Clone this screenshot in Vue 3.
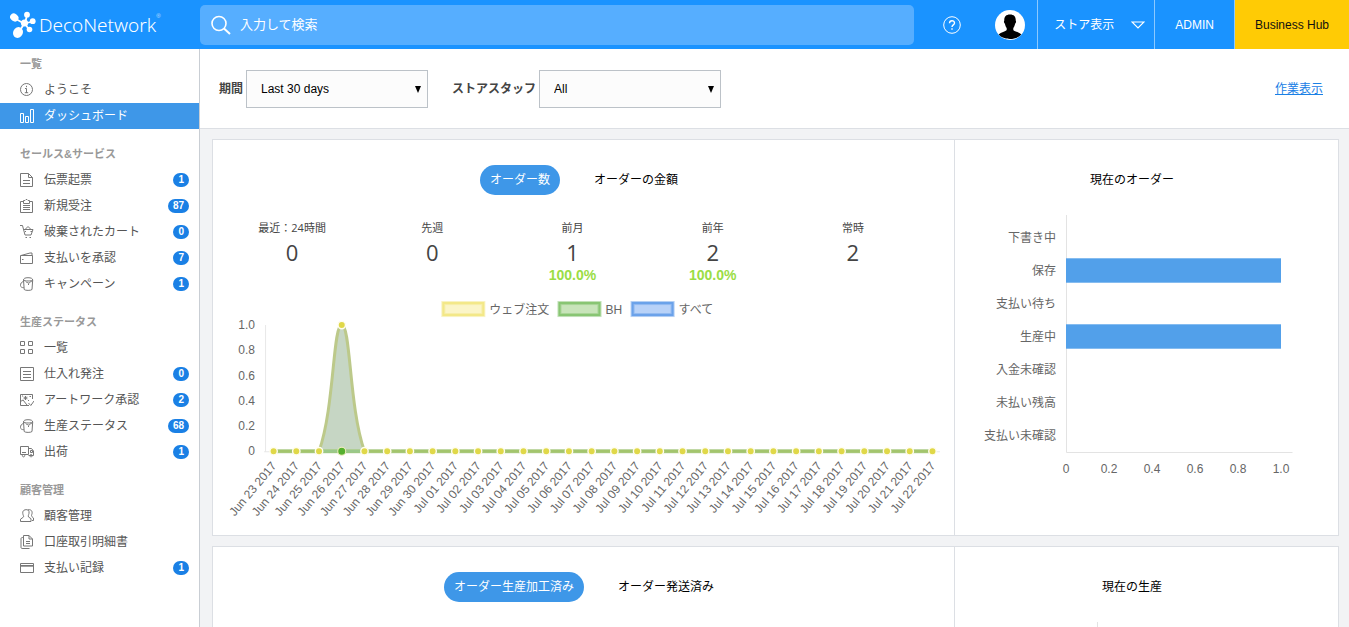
<script setup>
import { ref } from 'vue'

const search = ref('')
const period = ref('Last 30 days')
const staff = ref('All')

const sections = [
  {
    title: '一覧',
    items: [
      { icon: 'info', label: 'ようこそ' },
      { icon: 'bars', label: 'ダッシュボード', active: true },
    ],
  },
  {
    title: 'セールス&サービス',
    items: [
      { icon: 'doc', label: '伝票起票', count: 1 },
      { icon: 'clipboard', label: '新規受注', count: 87 },
      { icon: 'cart', label: '破棄されたカート', count: 0 },
      { icon: 'wallet', label: '支払いを承認', count: 7 },
      { icon: 'bucket', label: 'キャンペーン', count: 1 },
    ],
  },
  {
    title: '生産ステータス',
    items: [
      { icon: 'grid', label: '一覧' },
      { icon: 'list', label: '仕入れ発注', count: 0 },
      { icon: 'art', label: 'アートワーク承認', count: 2 },
      { icon: 'bucket', label: '生産ステータス', count: 68 },
      { icon: 'truck', label: '出荷', count: 1 },
    ],
  },
  {
    title: '顧客管理',
    items: [
      { icon: 'people', label: '顧客管理' },
      { icon: 'copy', label: '口座取引明細書' },
      { icon: 'card', label: '支払い記録', count: 1 },
    ],
  },
]

const icons = {
  info: 'M6.500 .5a6 6 0 1 0 0 12a6 6 0 1 0 0-12M6.500 2.800v1.400M5 5.500h1.500v4.500M4.800 9.700h3.400',
  bars: 'M.5 4.500h3v9h-3zM5.500 7.500h3v6h-3zM10.500 .5h3v13h-3z',
  doc: 'M.5 .5h8l4 4v9h-12zM8.500 .5v4h4M3 7.500h7M3 10.500h7',
  clipboard: 'M3.500 2.500h-3v11h12v-11h-3M3.500 4.500v-3h1.500l1-1h1l1 1h1.500v3zM3 6.500h7M3 8.500h7M3 10.500h7',
  cart: 'M0 .5h2.500l2.500 9.500h6l2-5.500h-9M5 4.500l3-3l3 3M5.500 12.500h1.500M9.500 12.500h1.500M5 6.500h1M10.500 6.500h1.500',
  wallet: 'M.5 4.500h12v8h-12zM1 4.500l9-2.500h2v2.500M2 8.500h1.500',
  bucket: 'M3.500 3c0-1.500 1.500-2.300 4.500-2.300s4.700.8 4.700 2.300c0 1.300-9.200 1.300-9.200 0M3.500 3l.7 9.500c1 1.200 6.800 1.200 7.800 0l.7-9.500M3.600 4.500c-2.300.5-3.100 2-3.100 4c0 1.500 1.500 2.200 3.300 2.200M6 4.500c.5 2 2.300.3 2.800 1.800c.5-1.500 2.300-1.500 3-1.800M8.500 6.500v1.500',
  grid: 'M.5 .5h4v4h-4zM8.500 .5h4v4h-4zM.5 8.500h4v4h-4zM8.500 8.500h4v4h-4z',
  list: 'M.5 .5h13v13h-13zM3 4.500h8M3 7.500h8M3 10.500h8',
  art: 'M12.500 6v-4.500h-12v11h8.500M.5 8.500l2.500-1.500l4 5M3.500 5h4M5.500 3v4M4.200 3.700l2.600 2.600M6.800 3.700l-2.600 2.600M2 3h1M9.500 3.500h1.500M8 7.500h1M8.500 10l2.300 2.500l3.200-4.500',
  truck: 'M.5 1.500h8v8h-8zM2 7.500h4M8.500 3.500h3l2 2.500v4.500h-5M3.500 9.500a1.200 1.200 0 1 0 .1 0M11 9.500a1.200 1.200 0 1 0 .1 0M10.500 5.500h2v2h-2z',
  people: 'M5 .8c3-.8 4.500 1 4 3.500c-.5 2-1 2.200-.5 3.700l2.500 1.700v2.800h-10.500v-2.300l3-2.200c.5-1-.5-1.500-.7-3.500c-.3-2 .5-3.200 2.200-3.700M8 .8c3.500-.5 4.500 1.500 4 4c-.5 1.500-.7 2-.2 2.700l1.700 1.500v2.500h-1.500',
  copy: 'M3.500 .5h5.500l3.500 3.500v7h-9zM9 .5v3.500h3.500M3.500 2.500c-2 0-2.500 0-2.500 1.500v8c0 1.500.5 1.500 2 1.500h6.500M6 6.500h4M6 8.500h4',
  card: 'M.5 2.500h13v9h-13zM.5 4.500h13M.5 5.200h13',
}

const stats = [
  { label: '最近：24時間', value: 0 },
  { label: '先週', value: 0 },
  { label: '前月', value: 1, change: '100.0%' },
  { label: '前年', value: 2, change: '100.0%' },
  { label: '常時', value: 2 },
]

const legend = [
  { label: 'ウェブ注文', x: 230, textX: 276, fill: '#fbf5c8', stroke: '#f3e888' },
  { label: 'BH', x: 346, textX: 392, fill: '#c8e4ba', stroke: '#88c573' },
  { label: 'すべて', x: 419, textX: 465, fill: '#b8d2f8', stroke: '#6ba2ea' },
]

const days = []
for (let i = 0; i < 30; i++) {
  const name = i < 8 ? `Jun ${23 + i} 2017` : `Jul ${String(i - 7).padStart(2, '0')} 2017`
  days.push({ name, x: 60.5 + (i * 658) / 29, value: i === 3 ? 1 : 0 })
}
const yOf = (v) => 161 - v * 126
const ticks = ['0', '0.2', '0.4', '0.6', '0.8', '1.0']

const x2 = days[2].x
const x3 = days[3].x
const x4 = days[4].x
const peak = `M${x2} 161C${x2 + 15.400} 118 ${x3 - 9} 35 ${x3} 35S${x4 - 15.400} 118 ${x4} 161`

const orders = [
  { label: '下書き中', value: 0 },
  { label: '保存', value: 1 },
  { label: '支払い待ち', value: 0 },
  { label: '生産中', value: 1 },
  { label: '入金未確認', value: 0 },
  { label: '未払い残高', value: 0 },
  { label: '支払い未確認', value: 0 },
]
</script>

<template>
  <div class="page">
    <header class="topbar">
      <a class="logo" href="#" aria-label="DecoNetwork">
        <svg width="28" height="28" viewBox="0 0 28 28" fill="#fff" stroke="#fff">
          <path d="M5 7.500L14 12.500M17 4.500L15 12M22.500 10.500L15 12.500M19.500 19L15 13M9 21L14 13" fill="none" stroke-width="1.800" />
          <g stroke="none">
            <ellipse cx="4.300" cy="6.500" rx="4.400" ry="3.700" transform="rotate(35 4.300 6.500)" />
            <circle cx="17" cy="3.700" r="2.900" />
            <circle cx="22.700" cy="10.200" r="2.900" />
            <circle cx="14.500" cy="12" r="3.600" />
            <circle cx="19.500" cy="18.500" r="2.800" />
            <ellipse cx="8" cy="21.500" rx="4.800" ry="5.600" transform="rotate(25 8 21.500)" />
          </g>
        </svg>
        <span class="brand">DecoNetwork</span><sup class="reg">®</sup>
      </a>
      <label class="search">
        <svg width="20" height="20" viewBox="0 0 20 20" fill="none" stroke="#fff" stroke-width="1.600">
          <circle cx="8" cy="8.500" r="7" />
          <path d="M13 13.500l6 5.500" stroke-width="2" />
        </svg>
        <input v-model="search" type="text" placeholder="入力して検索" aria-label="入力して検索" />
      </label>
      <button class="help" type="button" aria-label="Help">
        <svg width="18" height="18" viewBox="0 0 18 18" fill="none" stroke="#fff">
          <circle cx="9" cy="9" r="8.300" />
          <path d="M6.500 7.300c0-3.400 5-3.400 5-.3c0 2-2.500 1.800-2.500 4M9 12.300v1.500" stroke-width="1.400" />
        </svg>
      </button>
      <button class="avatar" type="button" aria-label="Account">
        <svg width="30" height="30" viewBox="0 0 30 30">
          <circle cx="15" cy="15" r="15" fill="#fff" />
          <path d="M15 4.500c-4.300 0-6 2.600-5.700 6c-.7.500-.3 2.600.6 3.200c.4 2 1 3.200 1.800 4.200v2c-1 1.500-5.900 2-8 4.700c2.300 3 7 4.400 11.300 4.400s9-1.400 11.300-4.400c-2.100-2.700-7-3.200-8-4.700v-2c.8-1 1.400-2.200 1.800-4.200c.9-.6 1.300-2.700.6-3.200c.3-3.400-1.400-6-5.700-6z" />
        </svg>
      </button>
      <button class="store" type="button">
        ストア表示
        <svg width="14" height="8" viewBox="0 0 14 8" fill="none" stroke="#fff" stroke-width="1.200"><path d="M1 1h12l-6 6z" /></svg>
      </button>
      <a class="top-link" href="#">ADMIN</a>
      <a class="top-link hub" href="#">Business Hub</a>
    </header>

    <div class="body">
      <nav class="sidebar">
        <section v-for="s in sections" :key="s.title">
          <h2>{{ s.title }}</h2>
          <a v-for="item in s.items" :key="item.label" href="#" :class="{ active: item.active }">
            <svg width="14" height="14" viewBox="0 0 14 14" fill="none" stroke="currentColor">
              <path :d="icons[item.icon]" />
            </svg>
            <span class="name">{{ item.label }}</span>
            <span v-if="item.count !== undefined" class="badge">{{ item.count }}</span>
          </a>
        </section>
      </nav>

      <main>
        <form class="filters" @submit.prevent>
          <label for="period">期間</label>
          <span class="select">
            <select id="period" v-model="period"><option>Last 30 days</option></select>
            <svg width="6" height="7" viewBox="0 0 6 7"><path d="M0 0h6l-3 7z" /></svg>
          </span>
          <label for="staff">ストアスタッフ</label>
          <span class="select">
            <select id="staff" v-model="staff"><option>All</option></select>
            <svg width="6" height="7" viewBox="0 0 6 7"><path d="M0 0h6l-3 7z" /></svg>
          </span>
          <a class="work" href="#">作業表示</a>
        </form>

        <div class="cards">
          <section class="card">
            <div class="panel">
              <div class="tabs">
                <button type="button" class="on">オーダー数</button>
                <button type="button">オーダーの金額</button>
              </div>
              <div class="stats">
                <div v-for="s in stats" :key="s.label" class="stat">
                  <span class="stat-label">{{ s.label }}</span>
                  <span class="stat-value">{{ s.value }}</span>
                  <span v-if="s.change" class="stat-change">{{ s.change }}</span>
                </div>
              </div>
              <svg class="chart line-chart" viewBox="0 0 741 235">
                <g v-for="l in legend" :key="l.label">
                  <rect :x="l.x" y="13" width="40" height="12" :fill="l.fill" :stroke="l.stroke" stroke-width="4" stroke-opacity=".5" />
                  <rect :x="l.x" y="13" width="40" height="12" fill="none" :stroke="l.stroke" stroke-width="2" />
                  <text :x="l.textX" y="24">{{ l.label }}</text>
                </g>
                <path d="M52.500 35v126M51 161.500h675" stroke="#e8e8e8" fill="none" />
                <text v-for="(t, i) in ticks" :key="t" x="42" :y="165 - i * 25.200" text-anchor="end">{{ t }}</text>
                <path :d="peak" fill="#c6d6c4" stroke="#bcc98a" stroke-width="3" />
                <path :d="`M${days[0].x} 161H${days[29].x}`" stroke="#b9d3a0" stroke-width="4" />
                <path :d="`M${days[0].x} 161H${days[29].x}`" stroke="#a3c56d" stroke-width="3" />
                <path :d="`M${x2} 161H${x4}`" stroke="#9ac88a" stroke-width="3" />
                <circle :cx="x3" cy="161" r="4" fill="#55b02f" stroke="#f3eec0" />
                <circle v-for="d in days" :key="d.name" :cx="d.x" :cy="yOf(d.value)" r="3.700" fill="#e0d848" stroke="#fffdf0" stroke-width="1.400" />
                <text
                  v-for="d in days"
                  :key="d.name"
                  :transform="`translate(${d.x + 3.500} 176) rotate(-50)`"
                  text-anchor="end"
                >{{ d.name }}</text>
              </svg>
            </div>
            <div class="panel side">
              <h3>現在のオーダー</h3>
              <svg class="chart bar-chart" viewBox="0 0 383 280">
                <path d="M111.500 5v237.500h226" stroke="#e3e3e3" fill="none" />
                <g v-for="(o, i) in orders" :key="o.label">
                  <text x="101" :y="32 + i * 33" text-anchor="end">{{ o.label }}</text>
                  <rect v-if="o.value" x="111" :y="15.300 + i * 33" :width="215 * o.value" height="24.400" fill="#52a0ea" />
                </g>
                <text v-for="(t, i) in ticks" :key="t" :x="111 + i * 43" y="263" text-anchor="middle">{{ t }}</text>
              </svg>
            </div>
          </section>

          <section class="card">
            <div class="panel">
              <div class="tabs">
                <button type="button" class="on">オーダー生産加工済み</button>
                <button type="button">オーダー発送済み</button>
              </div>
            </div>
            <div class="panel side">
              <h3>現在の生産</h3>
              <svg class="chart bar-chart" viewBox="0 0 383 280">
                <path d="M142.500 5v237.500h195" stroke="#e3e3e3" fill="none" />
              </svg>
            </div>
          </section>
        </div>
      </main>
    </div>
  </div>
</template>

<style>
body {
  margin: 0;
}
</style>

<style scoped>
.page {
  height: 100vh;
  overflow: hidden;
  display: flex;
  flex-direction: column;
  background: #f2f3f5;
  color: #444;
  font: 12px/16px "Liberation Sans", "Noto Sans CJK JP", sans-serif;
}
.page * {
  box-sizing: border-box;
}
button,
input,
select {
  font: inherit;
  border: 0;
  margin: 0;
  background: none;
}
button {
  padding: 0;
  cursor: pointer;
}
a {
  color: inherit;
  text-decoration: none;
}
svg {
  display: block;
  flex: none;
}

.topbar {
  display: flex;
  align-items: center;
  flex: none;
  height: 49px;
  background: #1a93ff;
  color: #fff;
}
.logo {
  display: flex;
  align-items: center;
  flex: none;
  width: 200px;
  padding-left: 10px;
}
.brand {
  font: 19px/26px "Noto Sans", "Open Sans", sans-serif;
  font-weight: 300;
  margin-left: 1px;
}
.reg {
  font-size: 6px;
  line-height: 10px;
  align-self: flex-start;
  opacity: .7;
}
.search {
  flex: 1;
  display: flex;
  align-items: center;
  height: 40px;
  padding-left: 11px;
  gap: 9px;
  border-radius: 5px;
  background: #56aeff;
}
.search input {
  flex: 1;
  padding: 0;
  outline: 0;
  font-size: 13px;
  color: #fff;
}
.search input::placeholder {
  color: #fff;
  opacity: 1;
}
.help {
  margin: 0 34px 0 29px;
}
.avatar {
  margin-right: 12px;
}
.store,
.top-link {
  display: flex;
  align-items: center;
  align-self: stretch;
  border-left: 1px solid #8cc9ff;
  color: #fff;
}
.store {
  gap: 17px;
  padding: 0 9px 0 16px;
}
.top-link {
  padding: 0 20px;
}
.hub {
  background: #ffcb05;
  color: #111;
}

.body {
  flex: 1;
  min-height: 0;
  display: flex;
}
.sidebar {
  flex: none;
  width: 200px;
  padding-top: 2px;
  background: #fff;
  border-right: 1px solid #c9ced4;
}
.sidebar section {
  margin-bottom: 12px;
}
.sidebar h2 {
  margin: 0;
  padding-left: 20px;
  font-size: 11px;
  line-height: 26px;
  color: #999;
}
.sidebar a {
  display: flex;
  align-items: center;
  height: 26px;
  padding: 0 10px 0 20px;
  color: #777;
}
.name {
  flex: 1;
  margin-left: 10px;
  color: #555;
}
.sidebar .active {
  background: #3e97e8;
  color: #fff;
}
.active .name {
  color: #fff;
}
.badge {
  padding: 0 5px;
  border-radius: 7px;
  background: #1a80e5;
  color: #fff;
  font-size: 10px;
  font-weight: bold;
  line-height: 14px;
}

main {
  flex: 1;
  min-width: 0;
}
.filters {
  display: flex;
  align-items: center;
  height: 80px;
  padding: 0 26px 0 19px;
  background: #fff;
  border-bottom: 1px solid #dcdfe4;
}
.filters label {
  font-weight: bold;
  margin-right: 3px;
}
.select {
  position: relative;
  width: 182px;
  margin-right: 24px;
}
.select select {
  appearance: none;
  display: block;
  width: 100%;
  height: 38px;
  padding: 0 14px;
  border: 1px solid #bcc2c8;
  border-radius: 0;
  background: #fcfcfc;
  color: #000;
}
.select svg {
  position: absolute;
  right: 7px;
  top: 16px;
  pointer-events: none;
}
.work {
  margin-left: auto;
  color: #1a80e5;
  text-decoration: underline;
}

.cards {
  display: flex;
  flex-direction: column;
  gap: 10px;
  padding: 10px 10px 10px 12px;
}
.card {
  display: grid;
  grid-template-columns: 742fr 383fr;
  border: 1px solid #dcdfe4;
  background: #fff;
}
.panel {
  min-width: 0;
  padding: 25px 0 10px;
}
.panel.side {
  border-left: 1px solid #dcdfe4;
  margin-left: -1px;
}
.tabs {
  display: flex;
  justify-content: center;
  gap: 24px;
}
.tabs button {
  height: 30px;
  padding: 0 10px;
  border-radius: 15px;
  color: #000;
}
.tabs .on {
  background: #3e97e8;
  color: #fff;
}
.stats {
  display: grid;
  grid-template-columns: repeat(5, 1fr);
  min-height: 62px;
  margin: 25px 32px 8px 9px;
}
.stat {
  display: flex;
  flex-direction: column;
  align-items: center;
  font-family: "Open Sans", "Noto Sans CJK JP", sans-serif;
}
.stat-label {
  font-size: 11px;
}
.stat-value {
  margin: 2px 0;
  font-size: 22px;
  line-height: 28px;
}
.stat-change {
  font: bold 14px/14px "Liberation Sans", Arial, sans-serif;
  color: #9add45;
}
.chart {
  width: 100%;
  height: auto;
}
.chart text {
  font-size: 12px;
  fill: #666;
}
h3 {
  margin: 0 29px 15px 0;
  font-size: 12px;
  font-weight: normal;
  line-height: 30px;
  text-align: center;
  color: #000;
}
</style>
